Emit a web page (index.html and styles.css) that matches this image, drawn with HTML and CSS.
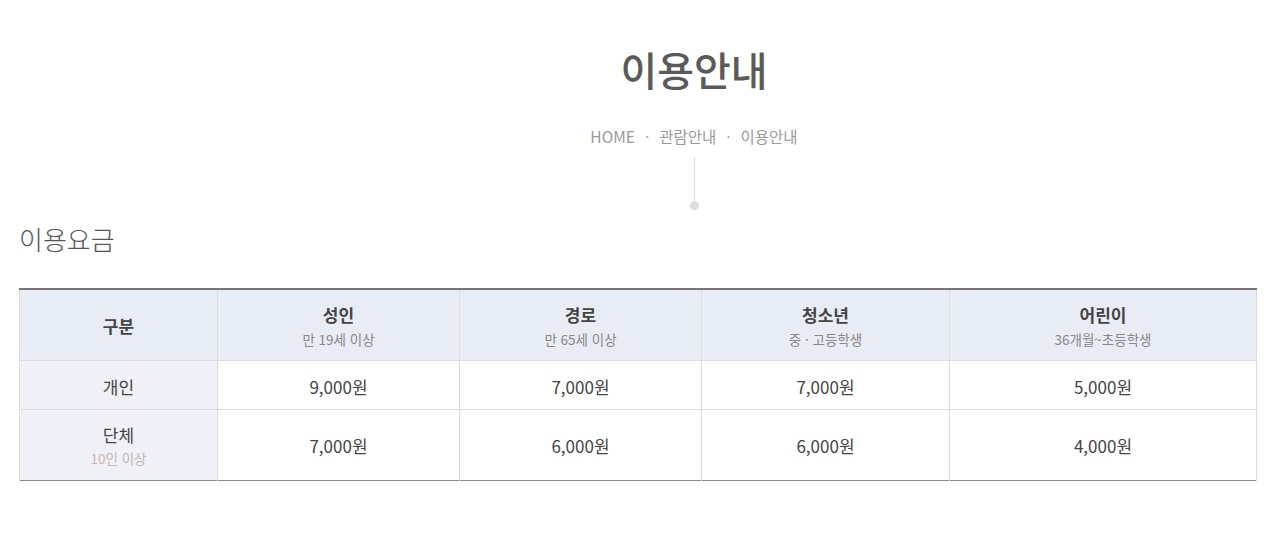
FILE: index.html
```html
<!DOCTYPE html>
<html lang="ko">
   <head>
      <meta charset="UTF-8">
      <title>이용안내</title>
      <link rel="stylesheet" href="styles.css">
   </head>
   <body>
      <div class="page-head">
         <h1 class="page-title">이용안내</h1>
         <div class="breadcrumb">
            <span>HOME</span>
            <span class="dot">·</span>
            <span>관람안내</span>
            <span class="dot">·</span>
            <span>이용안내</span>
         </div>
         <div class="head-line"></div>
      </div>
      <div class="content">
         <h2 class="section-title">이용요금</h2>
         <table class="fee-table">
            <colgroup>
               <col style="width: 198px">
               <col style="width: 242px">
               <col style="width: 242px">
               <col style="width: 248px">
               <col style="width: 307px">
            </colgroup>
            <thead>
               <tr>
                  <th class="first">구분</th>
                  <th>성인<span class="sub">만 19세 이상</span></th>
                  <th>경로<span class="sub">만 65세 이상</span></th>
                  <th>청소년<span class="sub">중 · 고등학생</span></th>
                  <th>어린이<span class="sub">36개월~초등학생</span></th>
               </tr>
            </thead>
            <tbody>
               <tr class="row-single">
                  <td class="first">개인</td>
                  <td>9,000원</td>
                  <td>7,000원</td>
                  <td>7,000원</td>
                  <td>5,000원</td>
               </tr>
               <tr class="row-group">
                  <td class="first">단체<span class="note">10인 이상</span></td>
                  <td>7,000원</td>
                  <td>6,000원</td>
                  <td>6,000원</td>
                  <td>4,000원</td>
               </tr>
            </tbody>
         </table>
      </div>
   </body>
</html>
```

FILE: styles.css
```css
body {
   margin: 0;
   background-color: white;
   font-family: "Noto Sans CJK KR", "Noto Sans", sans-serif;
   color: #444;
}
.page-head {
   display: flex;
   flex-direction: column;
   align-items: center;
   padding-left: 118px;
   padding-top: 45px;
}
.page-title {
   margin: 0;
   font-size: 40px;
   line-height: 48px;
   font-weight: 500;
   color: #5a5a5a;
}
.breadcrumb {
   display: flex;
   gap: 10px;
   margin-top: 33px;
   font-size: 15.5px;
   line-height: 20px;
   color: #999;
}
.breadcrumb .dot {
   color: #aaa;
}
.head-line {
   position: relative;
   width: 1px;
   height: 46px;
   margin-top: 11px;
   background-color: #ddd;
}
.head-line::after {
   content: "";
   position: absolute;
   left: -4px;
   bottom: -7px;
   width: 9px;
   height: 9px;
   border-radius: 50%;
   background-color: #ddd;
}
.content {
   padding-left: 19px;
   padding-top: 22px;
}
.section-title {
   margin: 0;
   font-family: "Liberation Serif", "Noto Sans CJK KR", serif;
   font-size: 26px;
   line-height: 34px;
   font-weight: 300;
   color: #555;
}
.fee-table {
   margin-top: 29px;
   width: 1237px;
   table-layout: fixed;
   border-collapse: collapse;
   border-top: 2px solid #777;
   border-bottom: 1px solid #888;
}
.fee-table th,
.fee-table td {
   border-left: 1px solid #ddd;
   border-right: 1px solid #ddd;
   text-align: center;
   padding: 0;
}
.fee-table th {
   height: 68px;
   padding-top: 2px;
   background-color: #e8ecf5;
   font-size: 17px;
   font-weight: 700;
   color: #444;
   line-height: 24px;
}
.fee-table .sub {
   display: block;
   margin-top: 1px;
   font-size: 13.5px;
   font-weight: 400;
   line-height: 22px;
   color: #888;
}
.fee-table td {
   font-size: 17px;
   color: #444;
   border-top: 1px solid #ddd;
}
.fee-table td.first {
   background-color: #f0f1f6;
}
.row-single td {
   height: 45px;
   padding-top: 3px;
}
.row-group td {
   height: 68px;
   padding-top: 2px;
   line-height: 24px;
}
.note {
   display: block;
   font-size: 13.5px;
   line-height: 22px;
   color: #c4b6b2;
}
```
